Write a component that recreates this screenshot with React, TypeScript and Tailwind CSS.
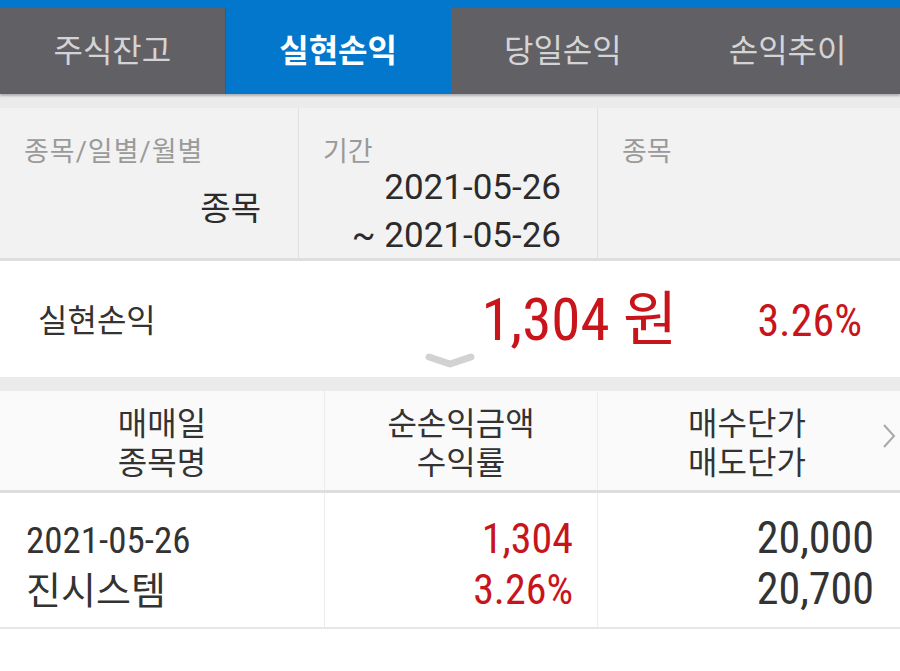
const FONT = { fontFamily: 'Roboto, "Noto Sans CJK KR", sans-serif' };
const NUM = { fontFamily: '"Roboto Condensed", Roboto, "Noto Sans CJK KR", sans-serif' };

const tabs = ["주식잔고", "실현손익", "당일손익", "손익추이"];

export default function App() {
  return (
    <div className="w-[900px] h-[671px] bg-white overflow-hidden" style={FONT}>
      <div className="h-[8px] bg-[#0277cc]" />
      <div className="flex h-[86px] bg-[#616065] shadow-[0_2px_2px_rgba(0,0,0,0.25)] relative">
        {tabs.map((t, i) => (
          <div
            key={t}
            className={`flex-1 flex items-center justify-center text-[32px] ${
              i === 1
                ? "bg-[#0277cc] text-white font-bold border-l border-[#4c5560]"
                : "text-[#d4d4d6]"
            }`}
          >
            {t}
          </div>
        ))}
      </div>
      <div className="h-[14px] bg-[#ebebeb]" />

      <div className="flex h-[153px] bg-[#f2f2f2] border-b-[3px] border-[#dedede]">
        <div className="w-[299px] border-r border-[#e0e0e0] pl-[24px] pr-[37px] pt-[31px]">
          <div className="text-[27px] text-[#9a9a9a] leading-none tracking-[1px]">종목/일별/월별</div>
          <div className="text-[33px] text-[#2b2b2b] text-right mt-[26px] leading-none">종목</div>
        </div>
        <div className="w-[299px] border-r border-[#e0e0e0] pl-[24px] pr-[36px] pt-[31px]">
          <div className="text-[27px] text-[#9a9a9a] leading-none">기간</div>
          <div className="text-[35px] text-[#2b2b2b] text-right leading-[48px] -mt-[2px]">
            <div>2021-05-26</div>
            <div>~ 2021-05-26</div>
          </div>
        </div>
        <div className="flex-1 pl-[24px] pt-[31px]">
          <div className="text-[27px] text-[#9a9a9a] leading-none">종목</div>
        </div>
      </div>

      <div className="relative h-[116px] bg-white flex items-center pl-[38px] pr-[38px]">
        <div className="text-[32px] text-[#333] flex-1 pt-[4px]">실현손익</div>
        <div className="text-[59px] text-[#c8141b] leading-none mr-[80px]" style={NUM}>1,304 원</div>
        <div className="text-[44px] text-[#c8141b] leading-none pt-[4px]" style={NUM}>3.26%</div>
        <svg className="absolute left-[425px] top-[92px]" width="50" height="16" viewBox="0 0 50 16">
          <path d="M4 4 L25 11 L46 4" stroke="#d2d2d2" strokeWidth="7" fill="none" strokeLinecap="round" strokeLinejoin="round" />
        </svg>
      </div>
      <div className="h-[14px] bg-[#ebebeb]" />

      <div className="relative flex h-[102px] bg-[#fafafa] border-b-[3px] border-[#dedede] text-[32px] text-[#333] leading-[39px]">
        <div className="w-[325px] border-r border-[#ececec] flex flex-col items-center justify-center pt-[6px]">
          <div>매매일</div>
          <div>종목명</div>
        </div>
        <div className="w-[273px] border-r border-[#ececec] flex flex-col items-center justify-center pt-[6px]">
          <div>순손익금액</div>
          <div>수익률</div>
        </div>
        <div className="flex-1 flex flex-col items-center justify-center pt-[6px] pr-[4px]">
          <div>매수단가</div>
          <div>매도단가</div>
        </div>
        <svg className="absolute right-[4px] top-[32px]" width="14" height="26" viewBox="0 0 14 26">
          <path d="M2 2 L12 13 L2 24" stroke="#a8a8a8" strokeWidth="2" fill="none" />
        </svg>
      </div>

      <div className="flex h-[136px] bg-white border-b-[2px] border-[#e6e6e6] text-[#333]">
        <div className="w-[325px] border-r border-[#ececec] pl-[26px] flex flex-col justify-center pt-[14px]">
          <div className="text-[37px] leading-[48px]" style={NUM}>2021-05-26</div>
          <div className="text-[38px] leading-[52px]">진시스템</div>
        </div>
        <div className="w-[273px] border-r border-[#ececec] pr-[24px] flex flex-col justify-center items-end text-[42px] text-[#c8141b] leading-[51px] pt-[8px]" style={NUM}>
          <div>1,304</div>
          <div>3.26%</div>
        </div>
        <div className="flex-1 pr-[26px] flex flex-col justify-center items-end text-[44px] leading-[51px] pt-[8px]" style={NUM}>
          <div>20,000</div>
          <div>20,700</div>
        </div>
      </div>
    </div>
  );
}
